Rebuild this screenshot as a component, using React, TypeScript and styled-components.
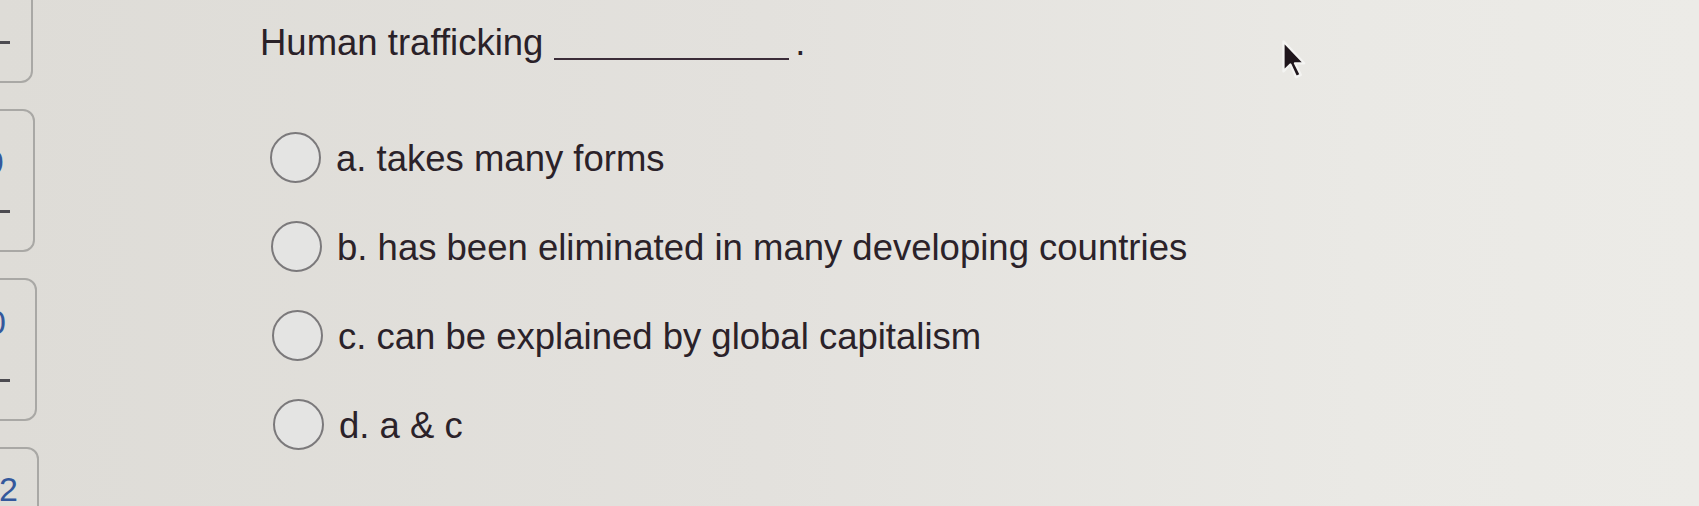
import styled, { createGlobalStyle } from "styled-components";

const GlobalStyle = createGlobalStyle`
  html, body {
    margin: 0;
    padding: 0;
  }
  body {
    background: linear-gradient(90deg, #dedcd7 0%, #e3e1dd 45%, #eae9e5 80%, #ecebe7 100%);
    font-family: "Liberation Sans", Arial, sans-serif;
    color: #2b2229;
  }
`;

const Page = styled.div`
  position: relative;
  display: flex;
  width: 1699px;
  height: 506px;
  overflow: hidden;
`;

const Sidebar = styled.nav`
  width: 42px;
  flex: none;
  display: flex;
  flex-direction: column;
  gap: 26px;
  overflow: hidden;
  margin-top: -60px;
`;

const NavBox = styled.div<{ $right: number }>`
  flex: none;
  box-sizing: border-box;
  width: 100px;
  height: 143px;
  margin-left: ${p => p.$right - 100}px;
  border: 2px solid #a9a8a5;
  border-radius: 12px;
  display: flex;
  flex-direction: column;
  align-items: flex-end;
  justify-content: space-between;
  padding: 0 0 37px 0;
`;

const NavNumber = styled.span<{ $inset: number; $top: number }>`
  margin-top: ${p => p.$top}px;
  margin-right: ${p => p.$inset}px;
  font-size: 34px;
  line-height: 34px;
  color: #34589c;
`;

const NavDash = styled.span<{ $inset: number }>`
  display: block;
  width: 30px;
  height: 3px;
  margin-top: auto;
  margin-right: ${p => p.$inset}px;
  background: #4c4b50;
`;

const Main = styled.main`
  flex: 1;
  padding: 21px 0 0 218px;
`;

const Question = styled.h1`
  margin: 0;
  font-size: 36.5px;
  font-weight: 400;
  line-height: 44px;
  color: #2a2128;
`;

const Blank = styled.span`
  display: inline-block;
  width: 235px;
  height: 0;
  margin: 0 6px 0 11px;
  border-bottom: 2px solid #3b2c38;
  vertical-align: -5px;
`;

const Options = styled.div`
  display: flex;
  flex-direction: column;
  gap: 39px;
  margin-top: 67px;
`;

const OptionRow = styled.label<{ $shift: number }>`
  display: flex;
  align-items: center;
  gap: 15px;
  height: 50px;
  margin-left: ${p => 10 + p.$shift}px;
`;

const Radio = styled.span`
  flex: none;
  box-sizing: border-box;
  width: 51px;
  height: 51px;
  border-radius: 50%;
  border: 2px solid #7b797b;
  background: #e4e4e3;
`;

const OptionText = styled.span`
  padding-top: 4px;
  font-size: 36.5px;
  line-height: 46px;
  color: #2b2229;
  white-space: nowrap;
`;

const Cursor = styled.svg`
  position: absolute;
  left: 1280px;
  top: 39px;
  filter: blur(0.6px);
`;

const navItems = [
  { right: 33, num: "", inset: 0, top: 0 },
  { right: 35, num: "9", inset: 29, top: 34 },
  { right: 37, num: "10", inset: 29, top: 25 },
  { right: 39, num: "12", inset: 19, top: 23 },
];

const answers = [
  "a. takes many forms",
  "b. has been eliminated in many developing countries",
  "c. can be explained by global capitalism",
  "d. a & c",
];

const App = () => {
  return (
    <>
      <GlobalStyle />
      <Page>
        <Sidebar>
          {navItems.map(item => (
            <NavBox key={item.right} $right={item.right}>
              {item.num && (
                <NavNumber $inset={item.inset} $top={item.top}>{item.num}</NavNumber>
              )}
              <NavDash $inset={item.right - 12} />
            </NavBox>
          ))}
        </Sidebar>
        <Main>
          <Question>
            Human trafficking<Blank />.
          </Question>
          <Options>
            {answers.map((text, i) => (
              <OptionRow key={text} $shift={i}>
                <Radio />
                <OptionText>{text}</OptionText>
              </OptionRow>
            ))}
          </Options>
        </Main>
        <Cursor width="30" height="44" viewBox="0 0 26 38">
          <path
            d="M3 2 L3 28 L9 22 L14 33 L18 31 L13 21 L21 21 Z"
            fill="#1f161c"
            stroke="#f4f4f2"
            strokeWidth="2"
            strokeLinejoin="round"
          />
        </Cursor>
      </Page>
    </>
  );
};

export default App;
